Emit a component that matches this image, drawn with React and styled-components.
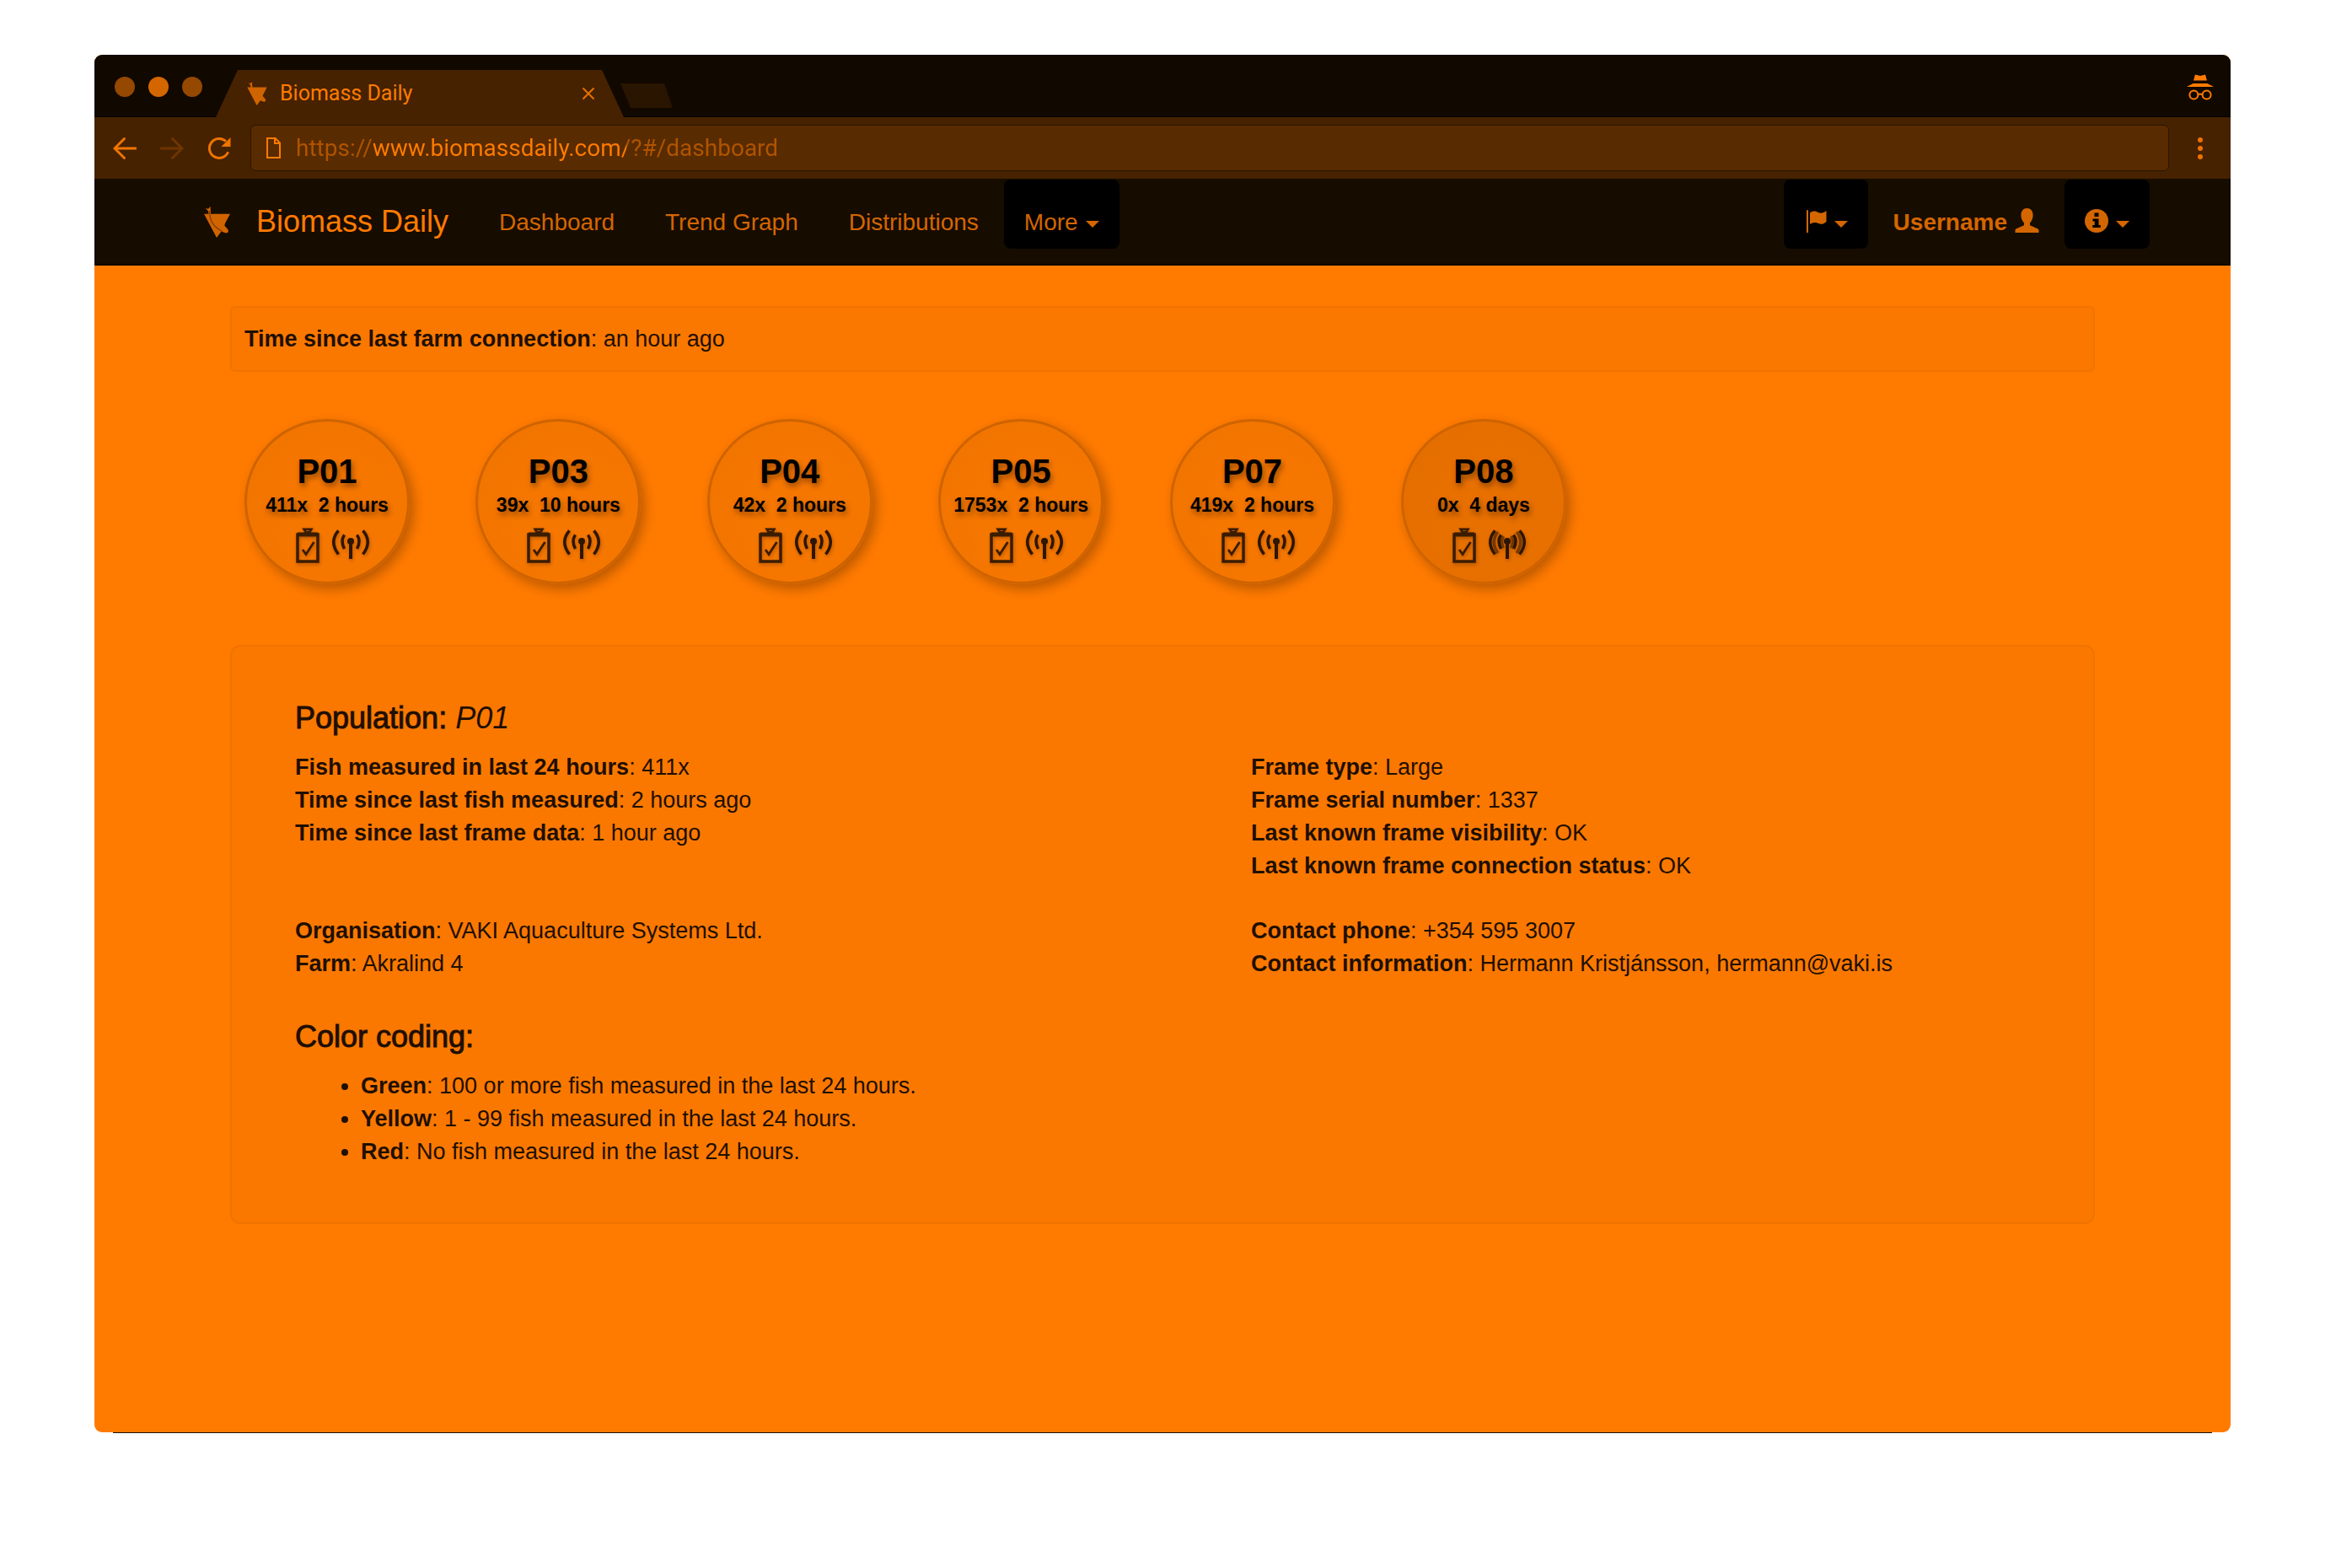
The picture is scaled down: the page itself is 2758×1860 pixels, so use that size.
import React from "react";
import styled, { createGlobalStyle, css } from "styled-components";

const GlobalStyle = createGlobalStyle`
  *, *::before, *::after { box-sizing: border-box; }
  body {
    margin: 0;
    background: #ffffff;
    color: #1f0f00;
    font: 27px/39px "Liberation Sans", Arial, sans-serif;
  }
  button, input { font: inherit; color: inherit; border: 0; margin: 0; padding: 0; background: none; }
  a { color: inherit; text-decoration: none; }
  svg { display: block; flex: none; }
`;

const Page = styled.div`
  min-height: 100vh;
  display: flex;
  flex-direction: column;
  padding: 65px 112px 160px;
`;

const BrowserWindow = styled.div`
  flex: 1;
  display: flex;
  flex-direction: column;
  border-radius: 9px;
  overflow: hidden;
  background: #ff7b00;
`;

const WindowEdge = styled.div`
  height: 1px;
  margin: 0 22px;
  background: #1a0d00;
`;

/* Browser chrome */

const TabStrip = styled.div`
  height: 74px;
  display: flex;
  align-items: flex-end;
  padding: 0 20px 0 24px;
  background: linear-gradient(#110800 73px, #000000 73px);
  font-family: Roboto, sans-serif;
`;

const WindowButtons = styled.div`
  display: flex;
  gap: 16px;
  padding-bottom: 24px;
`;

const WindowButton = styled.button`
  width: 24px;
  height: 24px;
  border-radius: 50%;
  background: ${(p) => (p.$bright ? "#d46600" : "#954800")};
`;

const Tab = styled.div`
  width: 484px;
  height: 56px;
  margin-left: 16px;
  padding: 0 28px 0 36px;
  display: flex;
  align-items: center;
  background: #462200;
  color: #ff7b00;
  font-size: 25px;
  line-height: 28px;
  clip-path: polygon(26px 0, 458px 0, 484px 100%, 0 100%);
`;

const TabTitle = styled.span`
  flex: 1;
  padding-left: 14px;
`;

const TabClose = styled.button`
  width: 28px;
  height: 28px;
  display: grid;
  place-items: center;
`;

const NewTab = styled.button`
  width: 62px;
  height: 29px;
  margin: 0 auto 11px -4px;
  background: #2a1500;
  clip-path: polygon(0 0, 52px 0, 100% 100%, 12px 100%);
`;

const Incognito = styled.span`
  padding-bottom: 20px;
`;

const Toolbar = styled.div`
  height: 73px;
  display: flex;
  align-items: center;
  background: #462200;
  color: #ee7200;
  padding: 0 18px 0 20px;
  font-family: Roboto, sans-serif;
`;

const ToolButton = styled.button`
  width: 32px;
  height: 36px;
  display: grid;
  place-items: center;
  margin-right: 24px;
  color: ${(p) => (p.$faded ? "#6e3500" : "#f07400")};
`;

const AddressBar = styled.label`
  flex: 1;
  height: 55px;
  display: flex;
  align-items: center;
  gap: 18px;
  margin-left: -3px;
  padding: 0 18px;
  border: 1px solid #2c1500;
  border-radius: 6px;
  background: #592b00;
  color: #ff7b00;
`;

const AddressInput = styled.input`
  flex: 1;
  height: 40px;
  font-size: 28px;
  line-height: 40px;
  color: #ff7b00;
  outline: none;
  background: linear-gradient(to right, #b05400 92px, #ff7b00 92px, #ff7b00 392px, #b05400 392px);
  background-clip: text;
  -webkit-background-clip: text;
  -webkit-text-fill-color: transparent;
`;

const MenuButton = styled.button`
  width: 36px;
  height: 36px;
  margin-left: 19px;
  display: grid;
  place-items: center;
`;

/* Site navigation */

const NavBar = styled.nav`
  display: flex;
  align-items: flex-start;
  height: 103px;
  padding: 1px 96px 0 130px;
  background: #170c00;
  border-bottom: 2px solid #000000;
  color: #d46600;
  font-size: 28px;
`;

const Brand = styled.a`
  display: flex;
  align-items: center;
  gap: 31px;
  padding: 30px 30px 0 0;
  font-size: 36px;
  line-height: 40px;
  color: #ff7b00;
`;

const navItem = css`
  display: flex;
  align-items: center;
  gap: 9px;
  height: 82px;
  padding-top: 31px;
  padding-bottom: 12px;
  line-height: 39px;
`;

const NavLink = styled.a`
  ${navItem}
  padding-left: 30px;
  padding-right: 30px;
  font-weight: ${(p) => (p.$strong ? 700 : 400)};
`;

const NavDropdown = styled.button`
  ${navItem}
  padding-left: 24px;
  padding-right: 24px;
  border-radius: 8px;
  background: #000000;
  color: #d46600;
`;

const Spacer = styled.div`
  flex: 1;
`;

const Caret = styled.span`
  border: solid transparent;
  border-width: 8px 8px 0;
  border-top-color: #d46600;
  margin-top: 4px;
`;

/* Dashboard */

const Main = styled.main`
  flex: 1;
  padding: 48px 161px;
`;

const Panel = styled.section`
  border: 2px solid #f07300;
  border-radius: ${(p) => (p.$large ? "12px" : "6px")};
  background: #fa7800;
  padding: ${(p) => (p.$large ? "65px 75px 64px" : "18px 15px 17px")};
`;

const Pens = styled.div`
  display: grid;
  grid-template-columns: repeat(8, 1fr);
  padding: 56px 0 72px 17px;
`;

const Pen = styled.button`
  width: 196px;
  height: 196px;
  display: flex;
  flex-direction: column;
  align-items: center;
  border: 3px solid #ce6300;
  border-radius: 50%;
  padding-top: 34px;
  background: ${(p) =>
    p.$stale
      ? "radial-gradient(circle at 60% 60%, #e87000 40%, #e36d00 100%)"
      : "radial-gradient(circle at 60% 60%, #f67700 40%, #ee7300 100%)"};
  box-shadow: 5px 6px 14px rgba(90, 40, 0, 0.4);
  color: #000000;
  font-weight: 700;
  text-shadow: 2px 4px 6px rgba(60, 25, 0, 0.5);
`;

const PenName = styled.span`
  font-size: 40px;
  line-height: 51px;
`;

const PenStats = styled.span`
  font-size: 23px;
  line-height: 28px;
  white-space: pre;
`;

const PenIcons = styled.span`
  display: flex;
  gap: 14px;
  padding: 13px 0 0 14px;
  filter: drop-shadow(1px 2px 2px rgba(90, 40, 0, 0.4));
`;

const Heading = styled.h2`
  margin: 0 0 19px;
  font-size: 36px;
  line-height: 40px;
  font-weight: 400;
  -webkit-text-stroke: 1px currentColor;

  em { -webkit-text-stroke: 0; }
`;

const Details = styled.div`
  display: grid;
  grid-template-columns: 27fr 22fr;
  row-gap: 38px;
  margin-bottom: 47px;
`;

const Line = styled.div`
  line-height: 39px;
`;

const Legend = styled.ul`
  margin: 0;
  padding-left: 78px;
`;

/* Drawings */

const FishLogo = ({ width, height, plain }) => (
  <svg width={width} height={height} viewBox="0 0 31 37" aria-hidden="true">
    <path
      d="M0 8.7H5.6L5 5.4L1.8 2L5 2.7L7.6 0L8 8.7H31L25 20L24.3 22.5L28.6 27.5L28.8 30.5L26 31.5L20.6 29.4L15 37Z"
      fill="#d06400"
    />
    {!plain && (
      <path d="M6.5 5C6.6 13 8 18 12.5 23C16 26.5 19 27.5 21.5 30" fill="none" stroke="#7a3a00" strokeWidth="1.2" />
    )}
  </svg>
);

const BackIcon = ({ flip }) => (
  <svg width="28" height="28" viewBox="0 0 28 28" fill="none" stroke="currentColor" strokeWidth="3" aria-hidden="true">
    <path
      d={flip ? "M1 14H25M14.5 2.5L26 14L14.5 25.5" : "M27 14H3M13.5 2.5L2 14L13.5 25.5"}
      strokeLinecap="round"
    />
  </svg>
);

const ReloadIcon = () => (
  <svg width="28" height="28" viewBox="0 0 28 28" aria-hidden="true">
    <path d="M24.6 18.2A11.5 11.5 0 1 1 22 5.7" fill="none" stroke="currentColor" strokeWidth="3" />
    <path d="M27.5 1V12H16.5Z" fill="currentColor" />
  </svg>
);

const PageIcon = () => (
  <svg width="17" height="25" viewBox="0 0 17 25" fill="none" stroke="currentColor" strokeWidth="2" aria-hidden="true">
    <path d="M1 1H10.5L16 6.5V24H1Z" />
    <path d="M10 1V7H16" />
  </svg>
);

const CloseIcon = () => (
  <svg width="16" height="16" viewBox="0 0 16 16" stroke="#e87000" strokeWidth="2" aria-hidden="true">
    <path d="M1.5 1.5L14.5 14.5M14.5 1.5L1.5 14.5" />
  </svg>
);

const IncognitoIcon = () => (
  <svg width="32" height="31" viewBox="0 0 32 31" aria-hidden="true">
    <path d="M10 0.5L16 2L22 0.5L24 7.5H8Z" fill="#ff7b00" />
    <path d="M7.5 11H24.5L32 15H0Z" fill="#ff7b00" />
    <g fill="none" stroke="#ff7b00" strokeWidth="2">
      <circle cx="8.4" cy="24.5" r="5" />
      <circle cx="23.6" cy="24.5" r="5" />
      <path d="M13.4 24.2Q16 22.6 18.6 24.2" />
    </g>
  </svg>
);

const DotsIcon = () => (
  <svg width="6" height="26" viewBox="0 0 6 26" fill="currentColor" aria-hidden="true">
    <circle cx="3" cy="3" r="3" />
    <circle cx="3" cy="13" r="3" />
    <circle cx="3" cy="23" r="3" />
  </svg>
);

const FlagIcon = () => (
  <svg width="27" height="30" viewBox="-3 0 27 30" fill="currentColor" aria-hidden="true">
    <path d="M0 0.5Q1 -0.5 2 0.5V27H0Z" />
    <path d="M4 3.5C8 0.5 11 1.5 14 3C17 4.5 20 3.5 23.5 1V14C20 17 17 17.5 14 16C11 14.5 8 14.5 4 17Z" />
  </svg>
);

const UserIcon = () => (
  <svg width="29" height="33" viewBox="0 0 29 33" fill="currentColor" aria-hidden="true">
    <path d="M14.5 0C18.7 0 21.6 3.2 21.6 8C21.6 12 20 15.5 18 17.5V20C20 21.8 26 23 28.5 25.5V29H0.5V25.5C3 23 9 21.8 11 20V17.5C9 15.5 7.4 12 7.4 8C7.4 3.2 10.3 0 14.5 0Z" />
  </svg>
);

const InfoIcon = () => (
  <svg width="28" height="32" viewBox="0 0 28 32" aria-hidden="true">
    <circle cx="14" cy="14" r="14" fill="currentColor" />
    <path d="M11.5 4.5H16.5V9H11.5Z M9.5 11.5H16.5V19H18.8V22H9.3V19H11.7V14.5H9.5Z" fill="#000000" />
  </svg>
);

const ClipboardIcon = () => (
  <svg width="28" height="42" viewBox="0 0 28 42" fill="none" stroke="#3a1c00" aria-hidden="true">
    <path d="M2 8H26V40H2Z" strokeWidth="3.5" />
    <path d="M2 8H26" strokeWidth="5" />
    <path d="M9.5 1.8H18.5L16.5 5H11.5Z" strokeWidth="2.5" />
    <path d="M8 26L12 31.5L21.5 17" strokeWidth="2.8" />
  </svg>
);

const SignalIcon = ({ doubled }) => (
  <svg width="46" height="38" viewBox="0 0 46 38" fill="none" stroke="#2e1600" strokeWidth="3.5" aria-hidden="true">
    <path d="M15.5 8.5Q10.5 15.5 15.5 25M30.5 8.5Q35.5 15.5 30.5 25" />
    <path d="M8.5 3.5Q-3 16.5 8.5 31.5M37.5 3.5Q49 16.5 37.5 31.5" />
    {doubled && (
      <g opacity="0.55">
        <path d="M18.5 10Q14.5 16 18.5 24M27.5 10Q31.5 16 27.5 24" />
        <path d="M12 5Q2.5 16.5 12 30M34 5Q43.5 16.5 34 30" />
      </g>
    )}
    <circle cx="23" cy="16" r="4" fill="#2e1600" stroke="none" />
    <path d="M23 17V37" strokeWidth="4" />
  </svg>
);

const pens = [
  { name: "P01", count: "411x", since: "2 hours" },
  { name: "P03", count: "39x", since: "10 hours" },
  { name: "P04", count: "42x", since: "2 hours" },
  { name: "P05", count: "1753x", since: "2 hours" },
  { name: "P07", count: "419x", since: "2 hours" },
  { name: "P08", count: "0x", since: "4 days", stale: true },
];

const details = [
  [
    ["Fish measured in last 24 hours", "411x"],
    ["Time since last fish measured", "2 hours ago"],
    ["Time since last frame data", "1 hour ago"],
  ],
  [
    ["Frame type", "Large"],
    ["Frame serial number", "1337"],
    ["Last known frame visibility", "OK"],
    ["Last known frame connection status", "OK"],
  ],
  [
    ["Organisation", "VAKI Aquaculture Systems Ltd."],
    ["Farm", "Akralind 4"],
  ],
  [
    ["Contact phone", "+354 595 3007"],
    ["Contact information", "Hermann Kristjánsson, hermann@vaki.is"],
  ],
];

const legend = [
  ["Green", "100 or more fish measured in the last 24 hours."],
  ["Yellow", "1 - 99 fish measured in the last 24 hours."],
  ["Red", "No fish measured in the last 24 hours."],
];

export default function App() {
  return (
    <>
      <GlobalStyle />
      <Page>
        <BrowserWindow>
          <TabStrip>
            <WindowButtons>
              <WindowButton aria-label="Close window" />
              <WindowButton $bright aria-label="Minimise window" />
              <WindowButton aria-label="Zoom window" />
            </WindowButtons>
            <Tab>
              <FishLogo width={26} height={28} plain />
              <TabTitle>Biomass Daily</TabTitle>
              <TabClose aria-label="Close tab">
                <CloseIcon />
              </TabClose>
            </Tab>
            <NewTab aria-label="New tab" />
            <Incognito>
              <IncognitoIcon />
            </Incognito>
          </TabStrip>
          <Toolbar>
            <ToolButton aria-label="Back">
              <BackIcon />
            </ToolButton>
            <ToolButton $faded aria-label="Forward">
              <BackIcon flip />
            </ToolButton>
            <ToolButton aria-label="Reload">
              <ReloadIcon />
            </ToolButton>
            <AddressBar>
              <PageIcon />
              <AddressInput
                type="text"
                aria-label="Address"
                spellCheck={false}
                defaultValue="https://www.biomassdaily.com/?#/dashboard"
              />
            </AddressBar>
            <MenuButton aria-label="Menu">
              <DotsIcon />
            </MenuButton>
          </Toolbar>
          <NavBar>
            <Brand href="#/dashboard">
              <FishLogo width={31} height={37} />
              Biomass Daily
            </Brand>
            <NavLink href="#/dashboard">Dashboard</NavLink>
            <NavLink href="#/trend">Trend Graph</NavLink>
            <NavLink href="#/distributions">Distributions</NavLink>
            <NavDropdown aria-haspopup="menu">
              More
              <Caret />
            </NavDropdown>
            <Spacer />
            <NavDropdown aria-haspopup="menu" aria-label="Language">
              <FlagIcon />
              <Caret />
            </NavDropdown>
            <NavLink href="#/user" $strong>
              Username
              <UserIcon />
            </NavLink>
            <NavDropdown aria-haspopup="menu" aria-label="Information">
              <InfoIcon />
              <Caret />
            </NavDropdown>
          </NavBar>
          <Main>
            <Panel>
              <Line>
                <b>Time since last farm connection</b>: an hour ago
              </Line>
            </Panel>
            <Pens>
              {pens.map((pen) => (
                <Pen key={pen.name} $stale={pen.stale}>
                  <PenName>{pen.name}</PenName>
                  <PenStats>{`${pen.count}  ${pen.since}`}</PenStats>
                  <PenIcons>
                    <ClipboardIcon />
                    <SignalIcon doubled={pen.stale} />
                  </PenIcons>
                </Pen>
              ))}
            </Pens>
            <Panel $large>
              <Heading>
                Population: <em>P01</em>
              </Heading>
              <Details>
                {details.map((group) => (
                  <div key={group[0][0]}>
                    {group.map(([label, value]) => (
                      <Line key={label}>
                        <b>{label}</b>: {value}
                      </Line>
                    ))}
                  </div>
                ))}
              </Details>
              <Heading>Color coding:</Heading>
              <Legend>
                {legend.map(([label, text]) => (
                  <li key={label}>
                    <b>{label}</b>: {text}
                  </li>
                ))}
              </Legend>
            </Panel>
          </Main>
        </BrowserWindow>
        <WindowEdge />
      </Page>
    </>
  );
}
